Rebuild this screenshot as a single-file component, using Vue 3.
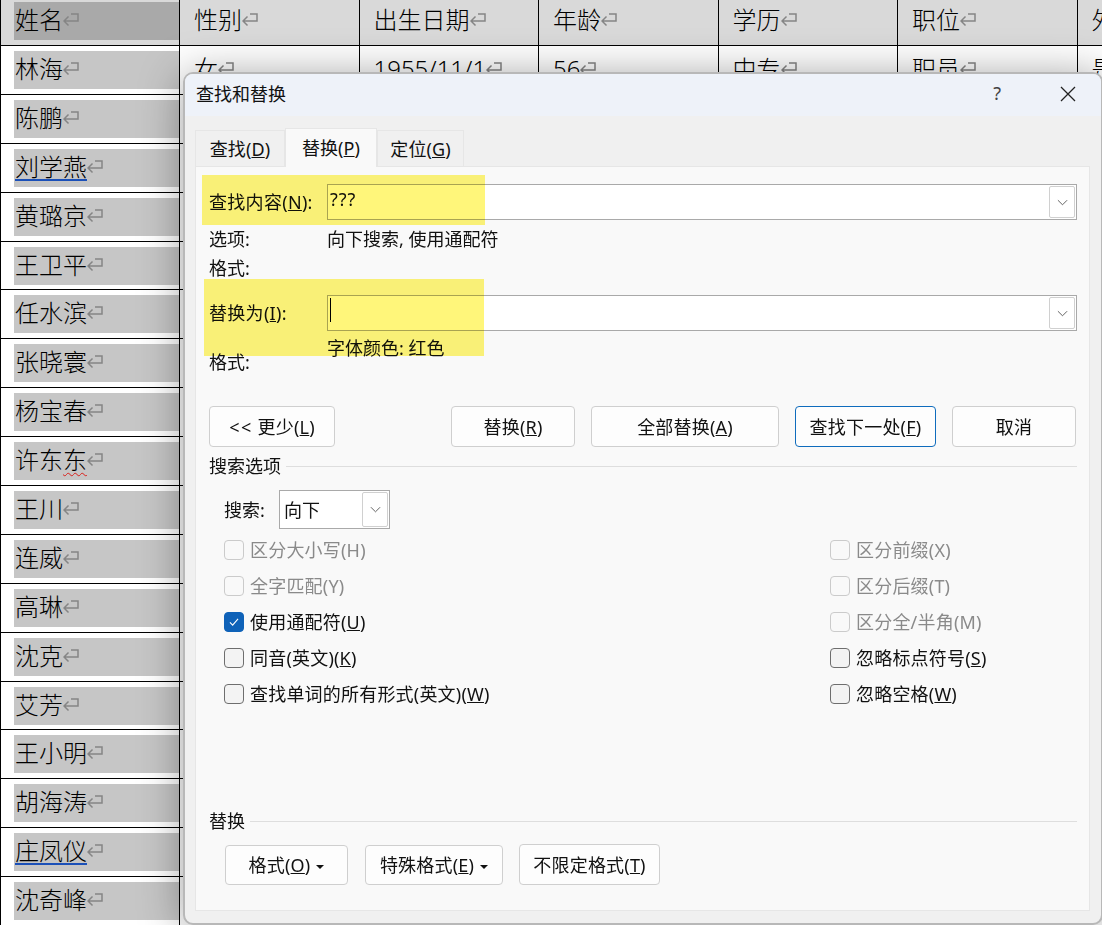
<script setup>
const headers = ['姓名', '性别', '出生日期', '年龄', '学历', '职位', '外语']
const first = ['女', '1955/11/1', '56', '中专', '职员', '是']
const names = [
  { parts: [{ t: '林海' }] },
  { parts: [{ t: '陈鹏' }] },
  { parts: [{ t: '刘学燕', c: 'blue' }] },
  { parts: [{ t: '黄璐京' }] },
  { parts: [{ t: '王卫平' }] },
  { parts: [{ t: '任水滨' }] },
  { parts: [{ t: '张晓寰' }] },
  { parts: [{ t: '杨宝春' }] },
  { parts: [{ t: '许东' }, { t: '东', c: 'wave' }] },
  { parts: [{ t: '王川' }] },
  { parts: [{ t: '连威' }] },
  { parts: [{ t: '高琳' }] },
  { parts: [{ t: '沈克' }] },
  { parts: [{ t: '艾芳' }] },
  { parts: [{ t: '王小明' }] },
  { parts: [{ t: '胡海涛' }] },
  { parts: [{ t: '庄凤仪', c: 'blue' }] },
  { parts: [{ t: '沈奇峰' }] },
]
const leftChecks = [
  { t: '区分大小写(H)', off: true },
  { t: '全字匹配(Y)', off: true },
  { t: '使用通配符(', u: 'U', e: ')', on: true },
  { t: '同音(英文)(', u: 'K', e: ')' },
  { t: '查找单词的所有形式(英文)(', u: 'W', e: ')' },
]
const rightChecks = [
  { t: '区分前缀(X)', off: true },
  { t: '区分后缀(T)', off: true },
  { t: '区分全/半角(M)', off: true },
  { t: '忽略标点符号(', u: 'S', e: ')' },
  { t: '忽略空格(', u: 'W', e: ')' },
]
const checks = leftChecks.flatMap((l, i) => [l, rightChecks[i]])
</script>

<template>
  <div class="page">
    <div class="table">
      <div class="row head">
        <div v-for="(h, i) in headers" :key="h" class="cell">
          <span :class="['txt', i === 0 ? 'mark dark' : '']">{{ h }}<svg class="ret" viewBox="0 0 16 14"><path d="M8 1H15V8H1M5.5 3.5L1 8L5.5 12.5" /></svg></span>
        </div>
      </div>
      <div v-for="(n, r) in names" :key="r" class="row">
        <div class="cell">
          <span class="txt mark"><span v-for="p in n.parts" :key="p.t" :class="p.c">{{ p.t }}</span><svg class="ret" viewBox="0 0 16 14"><path d="M8 1H15V8H1M5.5 3.5L1 8L5.5 12.5" /></svg></span>
        </div>
        <div v-for="(f, i) in first" :key="i" class="cell">
          <span v-if="r === 0" class="txt">{{ f }}<svg class="ret" viewBox="0 0 16 14"><path d="M8 1H15V8H1M5.5 3.5L1 8L5.5 12.5" /></svg></span>
        </div>
      </div>
    </div>

    <div class="dialog">
      <div class="titlebar">
        <span class="title">查找和替换</span>
        <span class="help">?</span>
        <svg class="close" viewBox="0 0 16 16"><path d="M1 1L15 15M15 1L1 15" /></svg>
      </div>
      <div class="tabs">
        <div class="tab t1">查找(<u>D</u>)</div>
        <div class="tab active t2">替换(<u>P</u>)</div>
        <div class="tab t3">定位(<u>G</u>)</div>
      </div>
      <div class="panel">
        <div class="field first">
          <label class="lab">查找内容(<u>N</u>):</label>
          <div class="input">
            <span class="val">???</span>
            <span class="drop"><svg viewBox="0 0 12 7"><path d="M1 1L6 6L11 1" /></svg></span>
          </div>
        </div>
        <div class="info"><span class="lab">选项:</span><span>向下搜索, 使用通配符</span></div>
        <div class="info"><span class="lab">格式:</span></div>
        <div class="field second">
          <label class="lab">替换为(<u>I</u>):</label>
          <div class="input">
            <span class="caret"></span>
            <span class="drop"><svg viewBox="0 0 12 7"><path d="M1 1L6 6L11 1" /></svg></span>
          </div>
        </div>
        <div class="fmt">
          <span class="lab fmt-lab">格式:</span>
          <span class="fmt-val">字体颜色: 红色</span>
        </div>
        <div class="btns">
          <button class="btn less"><span class="arrows">&lt;&lt;</span> 更少(<u>L</u>)</button>
          <button class="btn w124">替换(<u>R</u>)</button>
          <button class="btn w188">全部替换(<u>A</u>)</button>
          <button class="btn w141 primary">查找下一处(<u>F</u>)</button>
          <button class="btn w124">取消</button>
        </div>
        <div class="section s1"><span>搜索选项</span><i></i></div>
        <div class="search">
          <span class="search-lab">搜索:</span>
          <div class="select">
            <span class="select-val">向下</span>
            <span class="drop"><svg viewBox="0 0 12 7"><path d="M1 1L6 6L11 1" /></svg></span>
          </div>
        </div>
        <div class="checks">
          <div v-for="(c, i) in checks" :key="i" :class="['check', { off: c.off }]">
            <span :class="['box', { on: c.on }]">
              <svg v-if="c.on" viewBox="0 0 20 20"><path d="M5.5 10.5L8.5 13.5L14.5 6.5" /></svg>
            </span>
            <span class="check-txt">{{ c.t }}<u v-if="c.u">{{ c.u }}</u>{{ c.e }}</span>
          </div>
        </div>
        <div class="section s2"><span>替换</span><i></i></div>
        <div class="bottom">
          <button class="btn b1">格式(<u>O</u>)<em class="tri"></em></button>
          <button class="btn b2">特殊格式(<u>E</u>)<em class="tri"></em></button>
          <button class="btn b3">不限定格式(<u>T</u>)</button>
        </div>
        <span class="hl hl1"></span>
        <span class="hl hl2"></span>
      </div>
    </div>
  </div>
</template>

<style scoped>
.page {
  position: relative;
  width: 1102px;
  height: 925px;
  overflow: hidden;
  background: #fff;
  color: #111;
  font-family: "Noto Sans", "Noto Sans CJK SC", sans-serif;
}
.table {
  width: 1260px;
  border-left: 1px solid #000;
}
.row {
  display: grid;
  grid-template-columns: 179px repeat(6, 179.5px);
  height: 48.9px;
  box-sizing: border-box;
  border-bottom: 1px solid #000;
}
.row.head {
  height: 46px;
  background: #d9d9d9;
}
.cell {
  box-sizing: border-box;
  border-right: 1px solid #000;
  padding: 5px 0 0 14px;
  overflow: hidden;
}
.head .cell {
  padding-top: 2px;
}
.txt {
  display: flex;
  align-items: center;
  height: 38px;
  box-sizing: border-box;
  padding-bottom: 2px;
  font-size: 24px;
  line-height: 36px;
  white-space: nowrap;
  font-weight: 300;
  color: #000;
}
.mark {
  background: #c6c6c6;
  margin-left: -1px;
  padding-left: 1px;
}
.mark.dark {
  background: #a9a9a9;
}
.blue {
  text-decoration: underline solid #1b50b8 2px;
  text-underline-offset: 3px;
}
.wave {
  text-decoration: underline wavy #d9201c 1.2px;
  text-underline-offset: 3px;
}
.ret {
  width: 16px;
  height: 14px;
  flex: none;
  fill: none;
  stroke: #858585;
  stroke-width: 1.5;
}
.dialog {
  position: absolute;
  left: 183px;
  top: 72px;
  width: 920px;
  height: 853px;
  box-sizing: border-box;
  border: 2px solid #b8b8b8;
  border-radius: 10px;
  background: #f0f0f0;
  box-shadow: 0 4px 44px rgba(0, 0, 0, 0.38);
  font-size: 18px;
  display: flex;
  flex-direction: column;
  padding: 0 11px 12px 10px;
  overflow: hidden;
}
.titlebar {
  display: flex;
  align-items: center;
  height: 42px;
  margin: 0 -11px 0 -10px;
  padding: 0 25px 0 11px;
  background: #eef2f9;
  flex: none;
}
.title {
  flex: 1;
  padding-bottom: 4px;
}
.help {
  font-size: 18px;
  color: #444;
  margin-right: 59px;
  padding-bottom: 4px;
}
.close {
  width: 16px;
  height: 16px;
  margin-bottom: 3px;
  fill: none;
  stroke: #222;
  stroke-width: 1.3;
}
.tabs {
  display: flex;
  align-items: flex-end;
  height: 50px;
  flex: none;
  position: relative;
  z-index: 1;
}
.tab {
  box-sizing: border-box;
  height: 36px;
  line-height: 37px;
  text-align: center;
  border: 1px solid #e6e6e6;
  border-bottom: 0;
  background: #f0f0f0;
  white-space: nowrap;
  letter-spacing: 0.1px;
}
.t1 { width: 90px; }
.t2 { width: 92px; }
.t3 { width: 87px; }
.tab.active {
  height: 39px;
  margin-bottom: -1px;
  background: #f9f9f9;
  line-height: 39px;
}
.panel {
  position: relative;
  flex: 1;
  box-sizing: border-box;
  border: 1px solid #e6e6e6;
  background: #f9f9f9;
  padding: 0 12px 25px 13px;
  display: flex;
  flex-direction: column;
  isolation: isolate;
}
.field {
  display: flex;
  align-items: center;
  height: 36px;
  flex: none;
}
.field.first { margin-top: 17px; }
.field.second { margin-top: 12px; }
.lab {
  width: 118px;
  flex: none;
  white-space: nowrap;
}
.field .lab {
  padding-bottom: 2px;
  letter-spacing: 0.3px;
}
.input {
  flex: 1;
  height: 36px;
  box-sizing: border-box;
  border: 1px solid #a9a9a9;
  background: #fff;
  position: relative;
  display: flex;
  align-items: center;
  justify-content: space-between;
}
.val {
  padding-left: 2px;
  margin-top: -6px;
  line-height: 28px;
  letter-spacing: 1px;
}
.caret {
  width: 1px;
  height: 24px;
  background: #000;
  margin: 0 0 6px 2px;
}
.drop {
  width: 26px;
  height: 32px;
  box-sizing: border-box;
  border: 1px solid #d0d0d0;
  border-radius: 2px;
  margin-right: 1px;
  margin-left: auto;
  display: flex;
  align-items: center;
  justify-content: center;
}
.drop svg {
  width: 11px;
  height: 7px;
  fill: none;
  stroke: #555;
  stroke-width: 1;
}
.info {
  display: flex;
  height: 29px;
  line-height: 29px;
  flex: none;
}
.info:nth-of-type(2) {
  margin-top: 5px;
}
.fmt {
  display: flex;
  height: 45px;
  flex: none;
  align-items: flex-start;
}
.fmt-lab {
  padding-top: 18px;
  line-height: 26px;
}
.fmt-val {
  padding-top: 4px;
  line-height: 26px;
}
.btns {
  display: flex;
  gap: 16px;
  margin-top: 30px;
  padding-right: 1px;
  flex: none;
}
.btn {
  height: 41px;
  box-sizing: border-box;
  border: 1px solid #cfcfcf;
  border-radius: 4px;
  background: #fdfdfd;
  font: inherit;
  color: inherit;
  padding: 0 0 2px;
  white-space: nowrap;
  letter-spacing: 0.2px;
}
.arrows { letter-spacing: 1.5px; }
.less { width: 126px; margin-right: auto; }
.w124 { width: 124px; }
.w188 { width: 188px; }
.w141 { width: 141px; }
.primary { border-color: #0f6cbd; }
.section {
  display: flex;
  align-items: center;
  height: 26px;
  gap: 5px;
  line-height: 26px;
  flex: none;
}
.section i {
  flex: 1;
  height: 1px;
  background: #dedede;
}
.s1 { margin-top: 6px; }
.s2 { margin-top: auto; }
.search {
  display: flex;
  align-items: center;
  margin-top: 11px;
  padding-left: 15px;
  flex: none;
}
.search-lab {
  width: 55px;
  padding-bottom: 2px;
}
.select {
  width: 111px;
  height: 39px;
  box-sizing: border-box;
  border: 1px solid #a9a9a9;
  background: #fff;
  display: flex;
  align-items: center;
  padding-left: 4px;
}
.select-val {
  padding-bottom: 2px;
}
.select .drop {
  height: 35px;
}
.checks {
  display: grid;
  grid-template-columns: 606px 1fr;
  grid-auto-rows: 36px;
  margin-top: 3px;
  padding-left: 15px;
  flex: none;
}
.check {
  display: flex;
  align-items: center;
  gap: 6px;
  white-space: nowrap;
}
.check-txt {
  padding-bottom: 2px;
  letter-spacing: 0.2px;
}
.check.off {
  color: #8a8a8a;
}
.box {
  width: 20px;
  height: 20px;
  box-sizing: border-box;
  border: 1px solid #6e6e6e;
  border-radius: 4px;
  background: #f3f3f3;
  flex: none;
}
.off .box {
  border-color: #cbcbcb;
  background: #f9f9f9;
}
.box.on {
  background: #0f62b8;
  border-color: #0f62b8;
}
.box svg {
  display: block;
  width: 18px;
  height: 18px;
  fill: none;
  stroke: #fff;
  stroke-width: 1.2;
}
.bottom {
  display: flex;
  align-items: center;
  margin-top: 11px;
  padding-left: 16px;
  flex: none;
}
.bottom .btn {
  height: 40px;
}
.b1 { width: 123px; margin-right: 17px; }
.b2 { width: 138px; margin-right: 16px; }
.bottom .b3 { width: 141px; height: 41px; margin-top: -1px; }
.tri {
  display: inline-block;
  width: 0;
  height: 0;
  margin-left: 6px;
  vertical-align: 3px;
  border-left: 4px solid transparent;
  border-right: 4px solid transparent;
  border-top: 4px solid #111;
}
.hl {
  position: absolute;
  mix-blend-mode: multiply;
  background: #fff67a;
  pointer-events: none;
}
.hl1 {
  left: 6px;
  top: 8px;
  width: 283px;
  height: 50px;
}
.hl2 {
  left: 8px;
  top: 112px;
  width: 280px;
  height: 77px;
}
</style>
